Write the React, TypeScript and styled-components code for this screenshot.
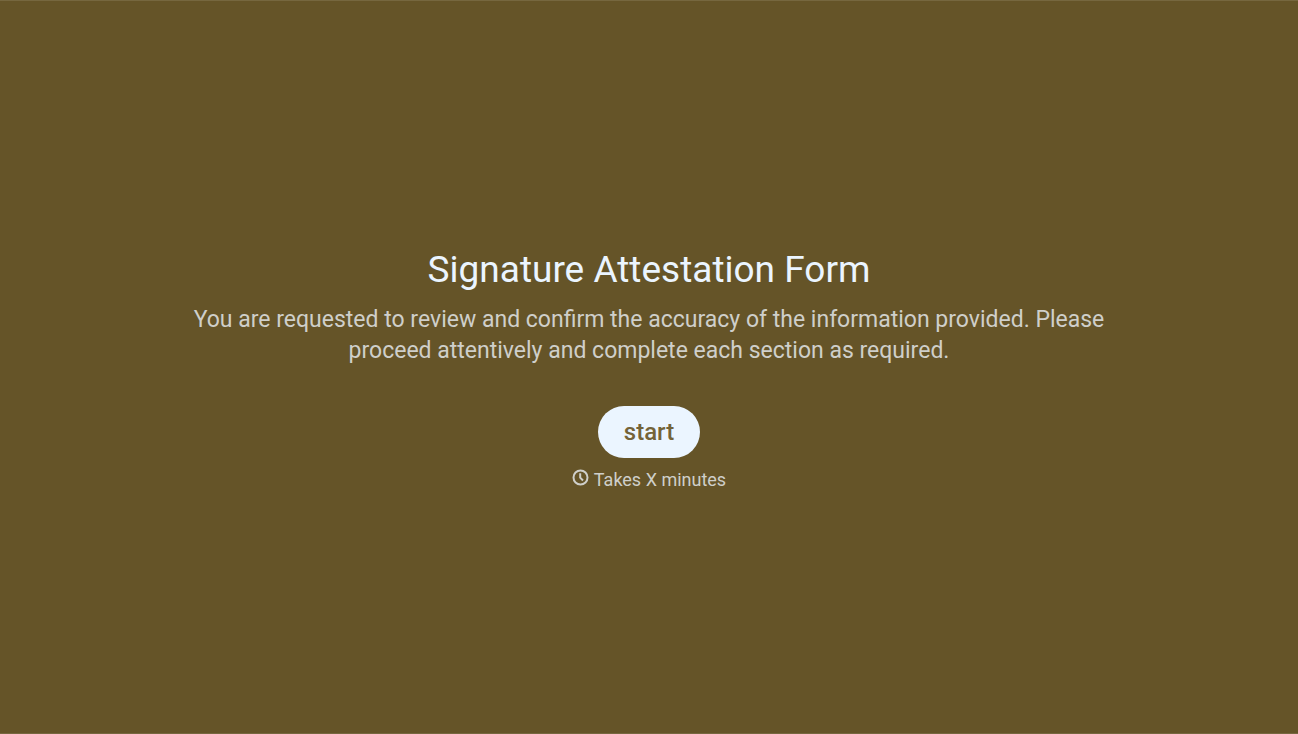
import React from "react";
import styled, { createGlobalStyle } from "styled-components";

const GlobalStyle = createGlobalStyle`
  * { box-sizing: border-box; }
  body {
    margin: 0;
    background: #655428;
    font-family: Roboto, Inter, "Liberation Sans", sans-serif;
  }
`;

const Page = styled.main`
  min-height: 100vh;
  display: flex;
  flex-direction: column;
  align-items: center;
  justify-content: center;
  padding: 26px 24px 24px;
  border-top: 1px solid #76673f;
  border-bottom: 1px solid #76673f;
  text-align: center;
  color: #cfcfca;
`;

const Title = styled.h1`
  margin: 0 0 8px;
  font-size: 37px;
  line-height: 52px;
  font-weight: 400;
  color: #ebf5ff;
`;

const Description = styled.p`
  margin: 0;
  max-width: 936px;
  font-size: 23px;
  line-height: 31px;
`;

const StartButton = styled.button`
  margin: 40px 0 10px;
  padding: 0 26px;
  height: 52px;
  border: 0;
  border-radius: 26px;
  background: #ebf5ff;
  color: #746338;
  font: inherit;
  font-size: 24px;
  font-weight: 500;
  cursor: pointer;
`;

const Duration = styled.p`
  display: flex;
  align-items: flex-start;
  gap: 5px;
  margin: 0;
  font-size: 18px;
  line-height: 24px;
`;

const ClockIcon = () => (
  <svg width="17" height="19" viewBox="0 0 17 19" fill="none" stroke="currentColor" strokeWidth="2" aria-hidden="true">
    <circle cx="8.5" cy="9.5" r="7" />
    <path d="M8.2 5.2V9.7L11 12.5" />
  </svg>
);

export default function App() {
  return (
    <>
      <GlobalStyle />
      <Page>
        <Title>Signature Attestation Form</Title>
        <Description>
          You are requested to review and confirm the accuracy of the information provided. Please proceed attentively
          and complete each section as required.
        </Description>
        <StartButton type="button">start</StartButton>
        <Duration>
          <ClockIcon />
          Takes X minutes
        </Duration>
      </Page>
    </>
  );
}
